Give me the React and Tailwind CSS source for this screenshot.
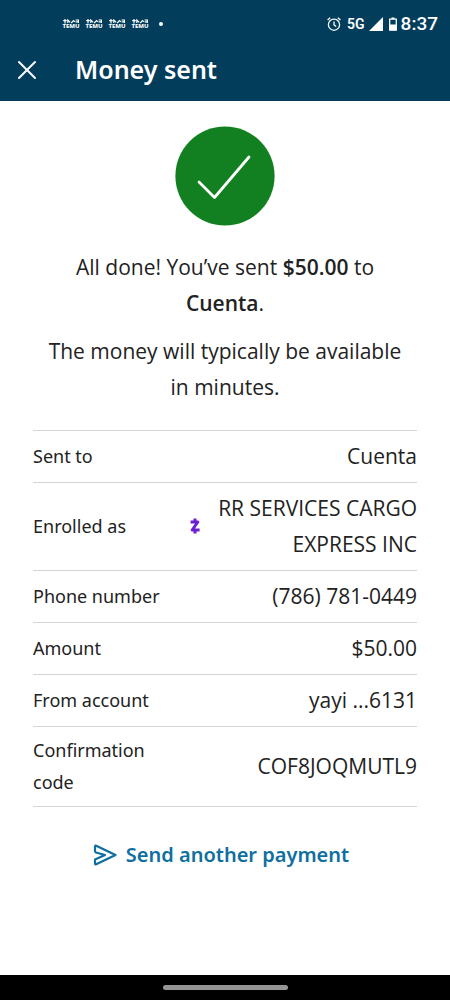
import React from 'react';
import { X } from 'lucide-react';

const details = [
  { label: 'Sent to', value: 'Cuenta' },
  { label: 'Enrolled as', value: 'RR SERVICES CARGO EXPRESS INC', zelle: true },
  { label: 'Phone number', value: '(786) 781-0449' },
  { label: 'Amount', value: '$50.00' },
  { label: 'From account', value: 'yayi ...6131' },
  { label: 'Confirmation code', value: 'COF8JOQMUTL9' },
];

const TemuIcon = () => (
  <div className="flex flex-col items-center w-4">
    <svg viewBox="0 0 16 5" className="w-4 h-[5px]" fill="none" stroke="currentColor" strokeWidth="1.2">
      <path d="M0.2 1.6h3.6M2 0v4.4M4.8 4V1l2.4 2.4M8.2 4l2.4-2.4 1.2 1.2M12.6 1h2.8v3M12.6 2.800h2.8" />
    </svg>
    <span className="text-[6px] leading-[5px] font-extrabold">TEMU</span>
  </div>
);

const ZelleIcon = () => (
  <svg viewBox="0 0 10 16" className="w-[10px] h-4 shrink-0" fill="none" stroke="#6d1ed4" strokeWidth="3" strokeLinejoin="round">
    <path d="M0.6 4h7.200L2.200 12h7.400M5 0.500v3.500M5 12v3.500" />
  </svg>
);

const StatusBar = () => (
  <div className="flex items-center justify-between h-12 pl-[63px] pr-3">
    <div className="flex items-center gap-[7px]">
      <TemuIcon />
      <TemuIcon />
      <TemuIcon />
      <TemuIcon />
      <span className="w-1 h-1 ml-1 rounded-full bg-white" />
    </div>
    <div className="flex items-center gap-1 font-['Roboto',sans-serif]">
      <svg viewBox="0 0 14 14" className="w-[14px] h-[14px] mr-[2px]" fill="none" stroke="currentColor" strokeWidth="1.3">
        <circle cx="7" cy="7.7" r="5.6" />
        <path d="M7 4.4v3.5l2.2 1.6M0.600 3l2.600-2.300M13.400 3l-2.600-2.300" />
      </svg>
      <span className="text-sm leading-5 font-semibold">5G</span>
      <svg viewBox="0 0 14 14" className="w-[14px] h-[14px]" fill="currentColor">
        <path d="M14 0v14H0z" />
      </svg>
      <svg viewBox="0 0 8 14" className="w-2 h-[14px] ml-[2px]" fill="none" stroke="currentColor" strokeWidth="1.3">
        <path d="M0.7 2.2h6.6v11H0.7z" />
        <path d="M2.5 0.5h3v1.5h-3zM0.7 7.5h6.6v5.7H0.7z" fill="currentColor" stroke="none" />
      </svg>
      <span className="text-[19px] leading-7 font-medium">8:37</span>
    </div>
  </div>
);

const Header = () => (
  <header className="bg-[#023e5c] text-white">
    <StatusBar />
    <div className="flex items-center h-[53px] pl-[11px] pb-[9px]">
      <button aria-label="Close" className="flex items-center">
        <X size={32} strokeWidth={1.5} />
      </button>
      <h1 className="ml-8 text-[25px] font-semibold">Money sent</h1>
    </div>
  </header>
);

const SendIcon = () => (
  <svg viewBox="0 0 24 22" className="w-6 h-[22px]" fill="none" stroke="currentColor" strokeWidth="2.2" strokeLinejoin="round" strokeLinecap="round">
    <path d="M2 2.400Q2 1.200 3.200 1.700L22.500 11 3.200 20.300Q2 20.800 2 19.600V15.500L12 11 3 8.500Q2 8 2 7z" />
  </svg>
);

const App = () => {
  return (
    <div className="flex flex-col min-h-screen bg-white text-[#222] font-['Noto_Sans',sans-serif]">
      <Header />

      <main className="flex-1 px-[33px] pt-[25px]">
        <svg viewBox="0 0 100 100" className="w-[100px] h-[100px] mx-auto" fill="none">
          <circle cx="50" cy="50" r="49.6" fill="#128020" />
          <path d="M24 56l15.5 15.5L74 31" stroke="#fff" strokeWidth="2.8" strokeLinecap="round" strokeLinejoin="round" />
        </svg>

        <div className="mt-[23px] px-3 text-center text-[21px] leading-9 font-['Open_Sans',sans-serif]">
          <p className="px-4">
            All done! You’ve sent <strong className="font-semibold">$50.00</strong> to <strong className="font-semibold">Cuenta</strong>.
          </p>
          <p className="mt-3">The money will typically be available in minutes.</p>
        </div>

        <table className="w-full mt-[25px] border-t border-[#d4d4d4]">
          <tbody>
            {details.map((row) => (
              <tr key={row.label} className="border-b border-[#d4d4d4]">
                <th scope="row" className="w-[130px] pt-[7px] pb-2 text-left font-normal text-lg leading-8">{row.label}</th>
                <td className="pt-[7px] pb-2 text-[21px] leading-9 font-['Open_Sans',sans-serif]">
                  <div className="flex items-center justify-end">
                    {row.zelle && <ZelleIcon />}
                    <span className="max-w-[217px] text-right">{row.value}</span>
                  </div>
                </td>
              </tr>
            ))}
          </tbody>
        </table>

        <a href="#send" className="flex items-center justify-center gap-[9px] mt-[30px] pr-2 text-xl leading-9 font-semibold text-[#0f6f9f]">
          <SendIcon />
          Send another payment
        </a>
      </main>

      <footer className="flex items-center justify-center h-[25px] bg-black">
        <div className="w-[125px] h-[5px] rounded-full bg-[#959595]" />
      </footer>
    </div>
  );
};

export default App;
